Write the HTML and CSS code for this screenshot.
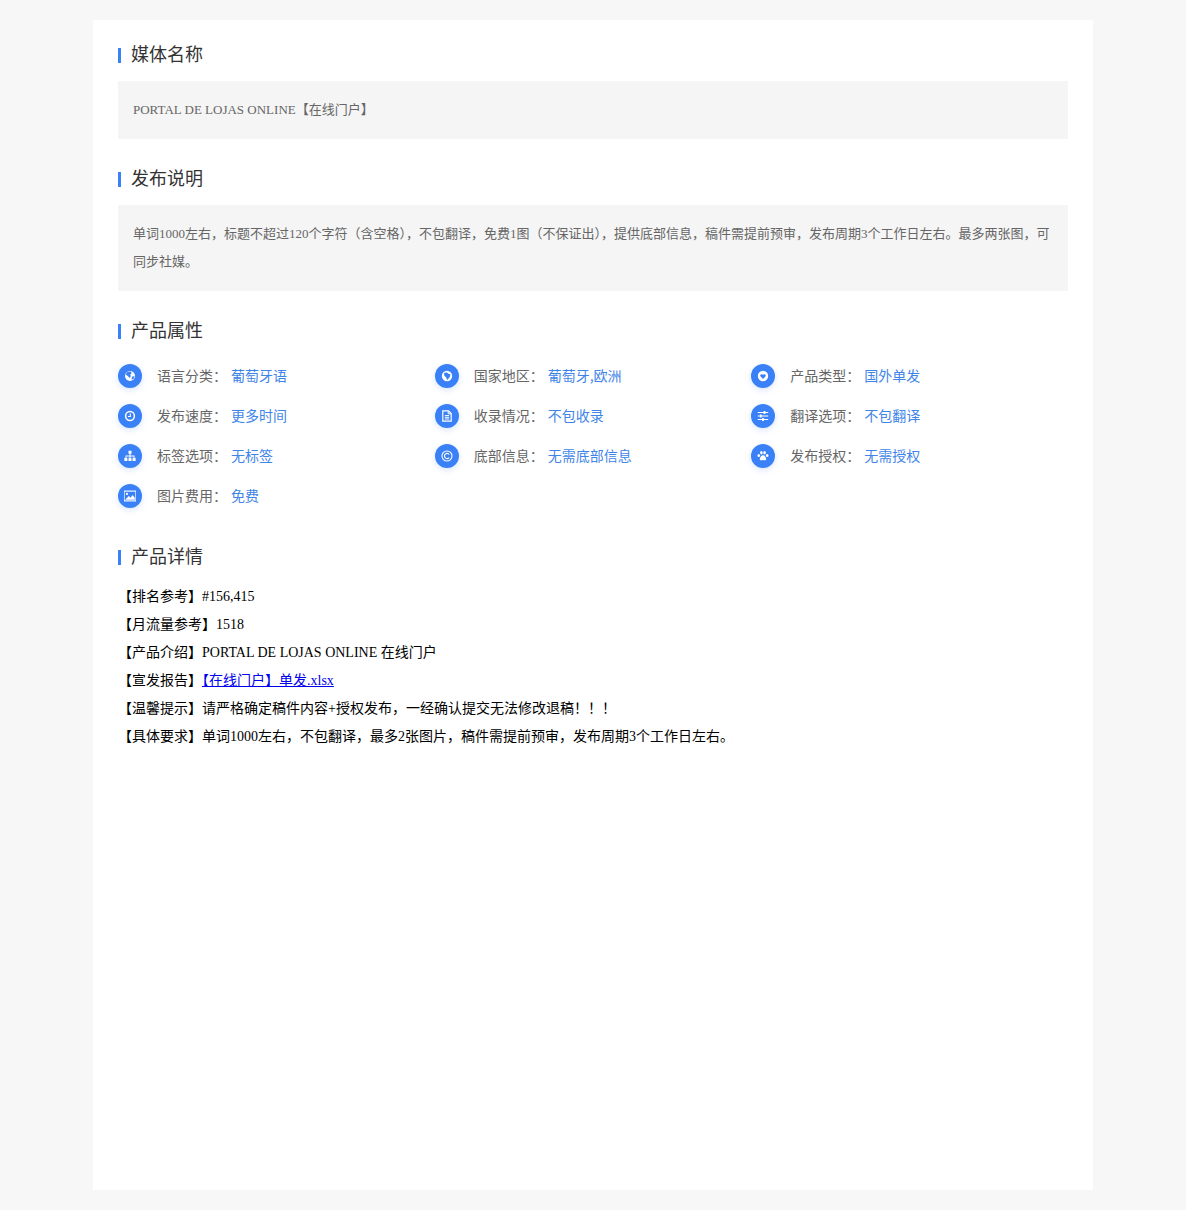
FILE: index.html
```html
<!DOCTYPE html>
<html lang="zh">
<head>
<meta charset="utf-8">
<title>媒体详情</title>
<link rel="stylesheet" href="styles.css">
</head>
<body>
<main class="card">
  <h2 class="title">媒体名称</h2>
  <div class="box">PORTAL DE LOJAS ONLINE【在线门户】</div>

  <h2 class="title">发布说明</h2>
  <div class="box">单词1000左右，标题不超过120个字符（含空格），不包翻译，免费1图（不保证出），提供底部信息，稿件需提前预审，发布周期3个工作日左右。最多两张图，可同步社媒。</div>

  <h2 class="title">产品属性</h2>
  <div class="attrs">
    <div class="attr">
      <span class="ico"><svg viewBox="0 0 12 12"><circle cx="6" cy="6" r="5" fill="#fff"/><path d="M3.500 1.700 6.500 1.500 7.800 3 6.300 4.600 6.800 6.200 5.600 7.900 3.800 6 1.600 4.600z M8 6.800 10.500 6 9.500 9 7.500 9.600z" fill="#3a80f6"/></svg></span>
      <span class="lab">语言分类：</span><span class="val">葡萄牙语</span>
    </div>
    <div class="attr">
      <span class="ico"><svg viewBox="0 0 12 12"><circle cx="6" cy="6" r="5.200" fill="#fff"/><path d="M3.200 2.800 6 2.400 7.400 3.800 9.400 4.200 8.800 7 6.200 10 5 7.200 3.200 5.600z" fill="#3a80f6"/></svg></span>
      <span class="lab">国家地区：</span><span class="val">葡萄牙,欧洲</span>
    </div>
    <div class="attr">
      <span class="ico"><svg viewBox="0 0 12 12"><circle cx="6" cy="6" r="5.200" fill="#fff"/><path d="M6 9 3.400 6.300C2.500 5 4.500 3.200 6 4.800 7.500 3.200 9.500 5 8.600 6.300z" fill="#3a80f6"/></svg></span>
      <span class="lab">产品类型：</span><span class="val">国外单发</span>
    </div>
    <div class="attr">
      <span class="ico"><svg viewBox="0 0 12 12"><circle cx="6" cy="6" r="4.400" fill="none" stroke="#fff" stroke-width="1.500"/><path d="M6.300 3.400V6.500H3.900" fill="none" stroke="#fff" stroke-width="1.100"/></svg></span>
      <span class="lab">发布速度：</span><span class="val">更多时间</span>
    </div>
    <div class="attr">
      <span class="ico"><svg viewBox="0 0 12 12"><path d="M1.800.8H7.500L10.200 3.500V11.200H1.800z" fill="none" stroke="#fff" stroke-width="1.200"/><path d="M7.200 1V3.800H10M3.800 5.600H8.200M3.800 7.300H8.200M3.800 9H8.200" fill="none" stroke="#fff" stroke-width="1"/></svg></span>
      <span class="lab">收录情况：</span><span class="val">不包收录</span>
    </div>
    <div class="attr">
      <span class="ico"><svg viewBox="0 0 12 12"><path d="M.8 2.500H11.200M.8 6H11.200M.8 9.500H11.200" stroke="#fff" stroke-width="1.100"/><path d="M7.500 1V4M3.800 4.500V7.500M6 8V11" stroke="#fff" stroke-width="1.800"/></svg></span>
      <span class="lab">翻译选项：</span><span class="val">不包翻译</span>
    </div>
    <div class="attr">
      <span class="ico"><svg viewBox="0 0 12 12"><path d="M4.500.8H7.500V3.800H6.500V5.500H10.500V7.800H9.600V6.400H6.500V7.800H5.500V6.400H2.400V7.800H1.500V5.500H5.500V3.800H4.500z" fill="#fff"/><path d="M.4 7.800H3.400V11H.4zM4.500 7.800H7.500V11H4.500zM8.600 7.800H11.600V11H8.600z" fill="#fff"/></svg></span>
      <span class="lab">标签选项：</span><span class="val">无标签</span>
    </div>
    <div class="attr">
      <span class="ico"><svg viewBox="0 0 12 12"><circle cx="6" cy="6" r="5" fill="none" stroke="#fff" stroke-width="1.100"/><path d="M8.200 4.500A2.600 2.600 0 1 0 8.200 7.500" fill="none" stroke="#fff" stroke-width="1.100"/></svg></span>
      <span class="lab">底部信息：</span><span class="val">无需底部信息</span>
    </div>
    <div class="attr">
      <span class="ico"><svg viewBox="0 0 12 12"><ellipse cx="1.800" cy="5.500" rx="1.300" ry="1.600" fill="#fff"/><ellipse cx="4.400" cy="2.700" rx="1.300" ry="1.700" fill="#fff"/><ellipse cx="7.600" cy="2.700" rx="1.300" ry="1.700" fill="#fff"/><ellipse cx="10.200" cy="5.500" rx="1.300" ry="1.600" fill="#fff"/><path d="M6 5.200C4.300 5.200 2.600 7.600 2.800 9.200 3 10.700 5 10.300 6 10.100 7 10.300 9 10.700 9.200 9.200 9.400 7.600 7.700 5.200 6 5.200z" fill="#fff"/></svg></span>
      <span class="lab">发布授权：</span><span class="val">无需授权</span>
    </div>
    <div class="attr">
      <span class="ico"><svg viewBox="0 0 12 12"><rect x=".1" y="1.100" width="11.800" height="9.800" fill="none" stroke="#fff" stroke-width="1.100"/><circle cx="3" cy="3.900" r="1.100" fill="#fff"/><path d="M1.200 9.800 4.800 6 6.700 7.700 8.500 5 10.800 7.800V9.800z" fill="#fff"/></svg></span>
      <span class="lab">图片费用：</span><span class="val">免费</span>
    </div>
  </div>

  <h2 class="title">产品详情</h2>
  <div class="detail">
    <p>【排名参考】#156,415</p>
    <p>【月流量参考】1518</p>
    <p>【产品介绍】PORTAL DE LOJAS ONLINE 在线门户</p>
    <p>【宣发报告】<a href="#">【在线门户】单发.xlsx</a></p>
    <p>【温馨提示】请严格确定稿件内容+授权发布，一经确认提交无法修改退稿！！！</p>
    <p>【具体要求】单词1000左右，不包翻译，最多2张图片，稿件需提前预审，发布周期3个工作日左右。</p>
  </div>
</main>
</body>
</html>
```
FILE: styles.css
```css
* { box-sizing: border-box; }
html, body { margin: 0; padding: 0; }
body {
  background: #f7f7f7;
  font-family: "Liberation Serif", "Noto Sans CJK SC", serif;
  padding: 20px 0;
}
.card {
  width: 1000px;
  height: 1170px;
  margin-left: 93px;
  background: #fff;
  padding: 20px 25px;
}
.title {
  position: relative;
  margin: 0;
  height: 28px;
  padding: 0 0 2px 13px;
  font-size: 18px;
  font-weight: 400;
  line-height: 26px;
  color: #333;
  font-family: "Noto Sans CJK SC", sans-serif;
  display: flex;
  align-items: center;
}
.title::before {
  content: "";
  position: absolute;
  left: 0;
  top: 8px;
  width: 3px;
  height: 15px;
  background: #3a80f6;
}
.box {
  margin: 13px 0 25px;
  padding: 15px;
  background: #f5f5f5;
  color: #666;
  font-size: 13px;
  line-height: 28px;
}
.attrs {
  display: grid;
  grid-template-columns: repeat(3, 1fr);
  grid-auto-rows: 40px;
  margin: 12px 0 26px;
}
.attr {
  display: flex;
  align-items: center;
  font-size: 14px;
  font-family: "Noto Sans CJK SC", sans-serif;
}
.ico {
  width: 24px;
  height: 24px;
  border-radius: 50%;
  background: #3a80f6;
  box-shadow: 0 2px 6px rgba(58, 128, 246, .2);
  display: flex;
  align-items: center;
  justify-content: center;
  margin-right: 15px;
  flex: none;
}
.ico svg { width: 12px; height: 12px; display: block; }
.lab { color: #666; margin-right: 4px; padding-bottom: 2px; }
.val { color: #3f85e8; padding-bottom: 2px; }
.detail {
  margin-top: 13px;
  font-size: 14px;
  line-height: 28px;
  color: #000;
}
.detail p { margin: 0; }
.detail a { color: #0000ee; text-decoration: underline; }
```
